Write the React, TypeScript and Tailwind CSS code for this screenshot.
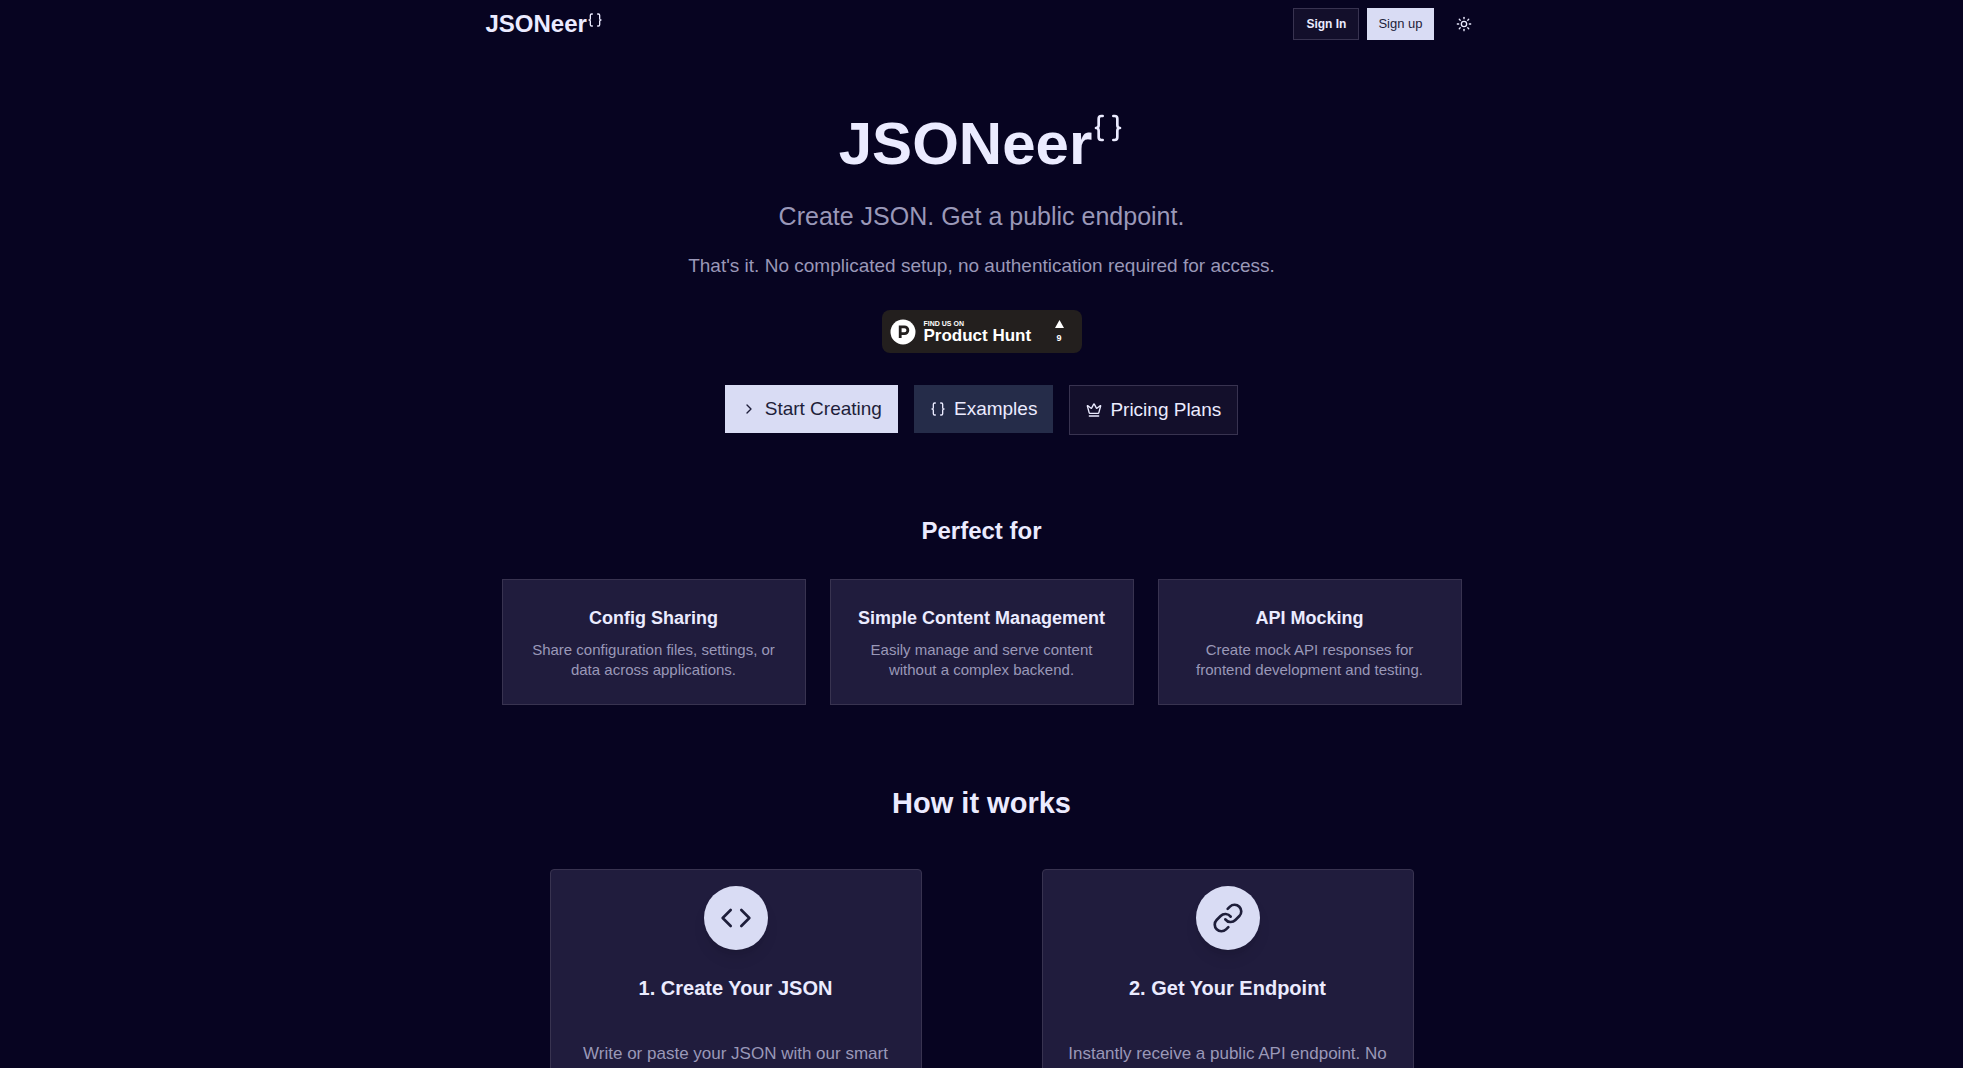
import { Braces, ChevronRight, Code, Crown, Link, Sun } from "lucide-react";
import { ReactNode } from "react";

type UseCase = {
  title: string;
  description: string;
};

type Step = {
  title: string;
  description: string;
  icon: ReactNode;
};

const useCases: UseCase[] = [
  {
    title: "Config Sharing",
    description: "Share configuration files, settings, or data across applications.",
  },
  {
    title: "Simple Content Management",
    description: "Easily manage and serve content without a complex backend.",
  },
  {
    title: "API Mocking",
    description: "Create mock API responses for frontend development and testing.",
  },
];

const steps: Step[] = [
  {
    title: "1. Create Your JSON",
    description: "Write or paste your JSON with our smart",
    icon: <Code size={32} />,
  },
  {
    title: "2. Get Your Endpoint",
    description: "Instantly receive a public API endpoint. No",
    icon: <Link size={32} />,
  },
];

const App = () => {
  return (
    <div className="h-screen overflow-hidden bg-[#070421] text-[#ebebff] font-['Liberation_Sans',Arial,sans-serif]">
      <Header />
      <main>
        <Hero />
        <UseCases />
        <HowItWorks />
      </main>
    </div>
  );
};
export default App;

const Header = () => {
  return (
    <header className="mx-auto flex h-12 max-w-5xl items-center justify-between px-4">
      <a href="#" className="flex items-start text-2xl font-bold">
        JSONeer
        <Braces size={16} className="mt-1" />
      </a>
      <nav className="flex items-center gap-2">
        <button className="h-8 border border-[#383350] bg-[#130f2b] px-3 text-xs font-bold">
          Sign In
        </button>
        <button className="h-8 bg-[#d9dcf4] px-[11px] text-[13px] text-[#1e1e3a]">
          Sign up
        </button>
        <button aria-label="Toggle theme" className="ml-2 flex h-8 w-7 items-center justify-center">
          <Sun size={16} />
        </button>
      </nav>
    </header>
  );
};

const Hero = () => {
  return (
    <section className="flex flex-col items-center px-4 pt-16 text-center">
      <h1 className="flex items-start text-6xl leading-16 font-bold">
        JSONeer
        <Braces size={32} />
      </h1>
      <p className="mt-6 text-[25px] leading-8 text-[#9a98b8]">
        Create JSON. Get a public endpoint.
      </p>
      <p className="mt-5 text-[19px] leading-7 text-[#9a98b8]">
        That's it. No complicated setup, no authentication required for access.
      </p>
      <ProductHunt />
      <div className="mt-8 flex flex-wrap items-start justify-center gap-4 text-[19px] leading-7">
        <button className="flex h-12 items-center gap-2 bg-[#d9dcf4] px-4 text-[#1e1e3a]">
          <ChevronRight size={16} />
          Start Creating
        </button>
        <button className="flex h-12 items-center gap-2 bg-[#252c49] px-4">
          <Braces size={16} />
          Examples
        </button>
        <button className="flex items-center gap-2 border border-[#383350] bg-[#130f2b] px-4 py-2.5">
          <Crown size={16} />
          Pricing Plans
        </button>
      </div>
    </section>
  );
};

const ProductHunt = () => {
  return (
    <a
      href="#"
      className="mt-[30px] flex h-[43px] w-[200px] items-center rounded-lg bg-[#231f1e] px-2 text-white"
    >
      <svg viewBox="0 0 26 26" className="size-[26px]" fill="none">
        <circle cx="13" cy="13" r="12.5" fill="white" />
        <path d="M10.2 19V7.8h4.2a3.4 3.4 0 0 1 0 6.9h-4.2" stroke="#231f1e" strokeWidth="2.8" />
      </svg>
      <span className="ml-2 flex flex-col text-left font-bold">
        <span className="text-[7px] leading-2">FIND US ON</span>
        <span className="text-[17px] leading-4">Product Hunt</span>
      </span>
      <span className="mr-2.5 ml-auto flex flex-col items-center gap-1 text-[9px] leading-3 font-bold">
        <svg viewBox="0 0 9 8" className="h-2 w-[9px]" fill="currentColor">
          <path d="M4.5 0 9 8H0z" />
        </svg>
        9
      </span>
    </a>
  );
};

const UseCases = () => {
  return (
    <section className="mx-auto max-w-5xl px-8 pt-20 text-center">
      <h2 className="text-2xl font-bold">Perfect for</h2>
      <div className="mt-8 grid grid-cols-3 gap-6">
        {useCases.map((value: UseCase) => {
          return (
            <div key={value.title} className="border border-[#383350] bg-[#201c3d] p-6">
              <h3 className="mb-2 text-lg font-bold whitespace-nowrap">{value.title}</h3>
              <p className="text-[15px] leading-5 text-[#9a98b8]">{value.description}</p>
            </div>
          );
        })}
      </div>
    </section>
  );
};

const HowItWorks = () => {
  return (
    <section className="mx-auto max-w-4xl px-4 pt-20 text-center">
      <h2 className="text-[29px] leading-9 font-bold">How it works</h2>
      <div className="mt-12 grid grid-cols-2 gap-[120px]">
        {steps.map((value: Step) => {
          return (
            <div
              key={value.title}
              className="flex flex-col items-center rounded border border-[#383350] bg-[#201c3d] px-6 pt-4 pb-6"
            >
              <div className="flex size-16 items-center justify-center rounded-full bg-[#d9dcf4] text-[#1e1e3a] shadow-lg">
                {value.icon}
              </div>
              <h3 className="mt-6 text-xl font-bold">{value.title}</h3>
              <p className="mt-10 text-[17px] leading-6 text-[#9a98b8]">{value.description}</p>
            </div>
          );
        })}
      </div>
    </section>
  );
};
